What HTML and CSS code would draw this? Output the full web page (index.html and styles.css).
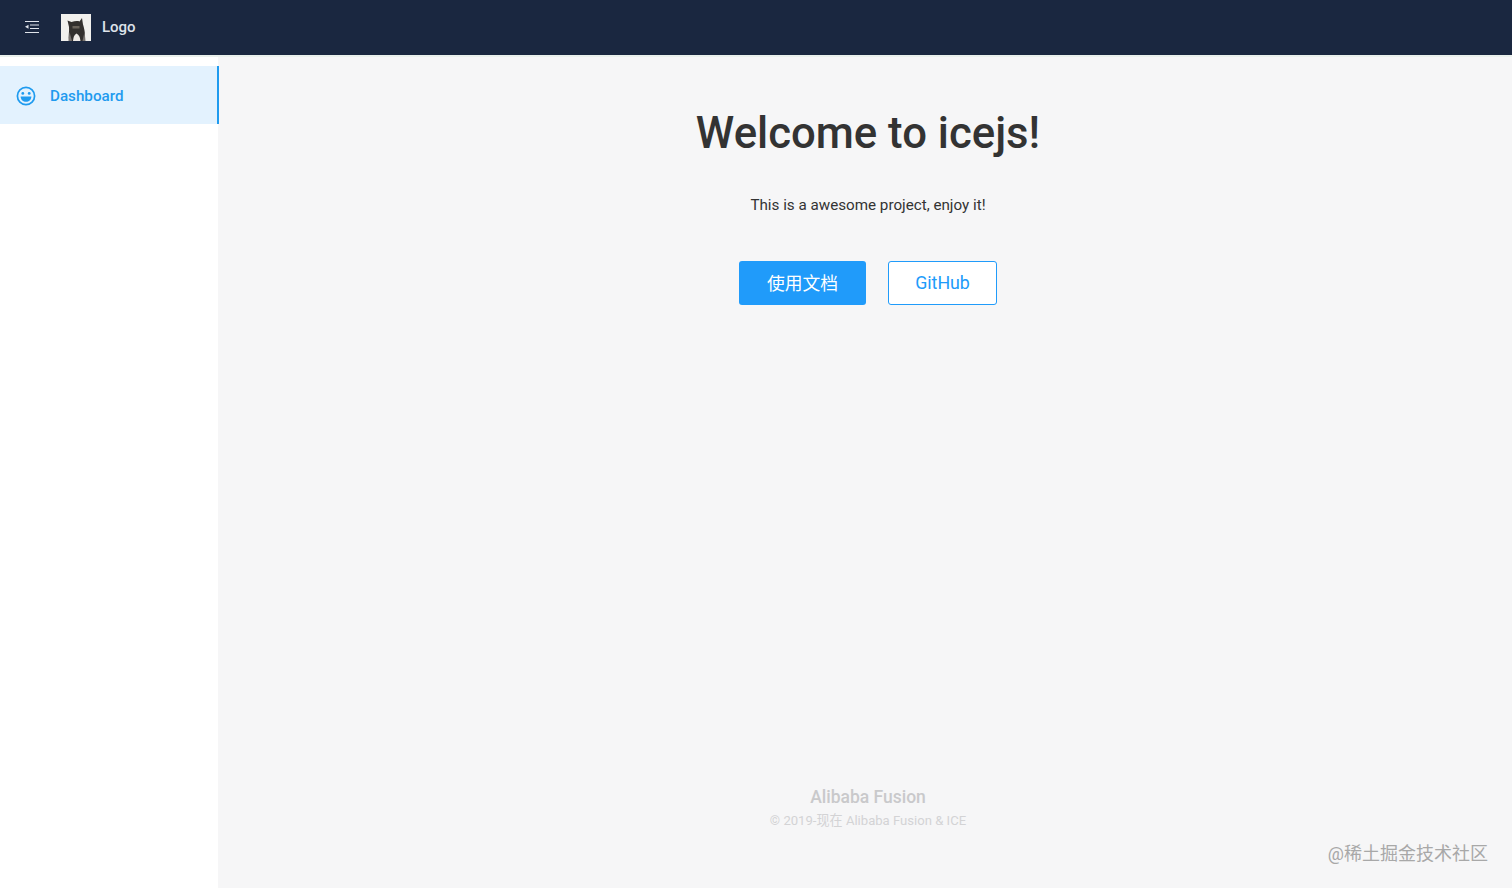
FILE: index.html
```html
<!DOCTYPE html>
<html lang="zh">
<head>
<meta charset="utf-8">
<title>icejs</title>
<link rel="stylesheet" href="styles.css">
</head>
<body>
<header class="topbar">
  <svg class="trigger" width="16" height="14" viewBox="0 0 16 14" aria-hidden="true">
    <path d="M1 1.500H15M6 5H15M6 8.500H15M1 12.500H15" stroke="#dfe3ea" stroke-width="1" fill="none"/>
    <path d="M1 6.800 L4.500 4.800 V8.800 Z" fill="#dfe3ea"/>
  </svg>
  <svg class="logo" width="30" height="27" viewBox="0 0 30 27" aria-hidden="true">
    <rect width="30" height="27" fill="#f1f0ed"/>
    <path d="M8 27 C7 22 8.500 18 8 13 L6.500 6.500 L10.500 8 C14 6.800 17 6.800 18.500 7.500 L21 4 L22 10.500 C23 14 24.500 18 24 27 Z" fill="#33302e"/>
    <path d="M12 27 C12.500 23 13 21 15.500 19.500 C18 21 19 23 19.500 27 Z" fill="#eeeae6"/>
    <path d="M11.500 12 H18.500 V14.500 H11.500 Z" fill="#6b645c"/>
    <path d="M8.500 18 L11 27 H7.500 Z M23.500 18 L21.500 27 H24.500 Z" fill="#77726f"/>
  </svg>
  <span class="brand">Logo</span>
</header>
<div class="layout">
  <aside class="sidebar">
    <nav class="menu">
      <a class="menu-item" href="#">
        <svg class="smile" width="20" height="20" viewBox="0 0 20 20" aria-hidden="true">
          <circle cx="10" cy="10" r="8.600" fill="none" stroke="#1f9bef" stroke-width="1.700"/>
          <circle cx="6.800" cy="7.400" r="1.400" fill="#1f9bef"/>
          <circle cx="13.200" cy="7.400" r="1.400" fill="#1f9bef"/>
          <path d="M4.600 10.400 H15.400 C15.200 13.800 12.900 15.800 10 15.800 C7.100 15.800 4.800 13.800 4.600 10.400 Z" fill="#1f9bef"/>
        </svg>
        <span class="menu-label">Dashboard</span>
      </a>
    </nav>
  </aside>
  <main class="content">
    <section class="hero">
      <h1 class="title">Welcome to icejs!</h1>
      <p class="lead">This is a awesome project, enjoy it!</p>
      <div class="actions">
        <a class="btn btn-primary" href="#">使用文档</a>
        <a class="btn btn-outline" href="#">GitHub</a>
      </div>
    </section>
    <footer class="footer">
      <div class="footer-name">Alibaba Fusion</div>
      <div class="footer-copy">© 2019-现在 Alibaba Fusion &amp; ICE</div>
    </footer>
  </main>
</div>
<div class="watermark">@稀土掘金技术社区</div>
</body>
</html>
```
FILE: styles.css
```css
* { box-sizing: border-box; }
html, body { height: 100%; }
body {
  margin: 0;
  height: 888px;
  overflow: hidden;
  display: flex;
  flex-direction: column;
  background: #f6f6f7;
  font-family: Roboto, "Noto Sans CJK SC", sans-serif;
}
.topbar {
  height: 55px;
  flex: none;
  display: flex;
  align-items: center;
  padding-left: 24px;
  background: #1a2740;
}
.trigger { flex: none; margin-top: -2px; }
.logo { flex: none; margin-left: 21px; margin-top: -1px; }
.brand {
  margin-left: 11px;
  margin-top: -1px;
  color: #dfe3ea;
  font-size: 15px;
  font-weight: 500;
}
.layout {
  flex: 1;
  display: flex;
  min-height: 0;
  border-top: 2px solid #e9f0ec;
}
.sidebar {
  width: 218px;
  flex: none;
  background: #fff;
  padding-top: 9px;
}
.menu-item {
  height: 58px;
  margin-right: -1px;
  display: flex;
  align-items: center;
  gap: 14px;
  padding-left: 16px;
  background: #e3f2fe;
  border-right: 2px solid #1f9bef;
  color: #1f9bef;
  font-size: 15.200px;
  font-weight: 500;
  text-decoration: none;
}
.smile { margin-top: 2px; }
.menu-label { margin-top: 2px; }
.content {
  flex: 1;
  display: flex;
  flex-direction: column;
  align-items: center;
  padding-left: 6px;
}
.hero {
  display: flex;
  flex-direction: column;
  align-items: center;
  padding-top: 47px;
  flex: 1;
}
.title {
  margin: 0;
  color: #333;
  font-size: 43.700px;
  line-height: 58px;
  font-weight: 500;
}
.lead {
  margin: 31px 0 0;
  color: #333;
  font-size: 15.200px;
  line-height: 24px;
}
.actions {
  display: flex;
  gap: 22px;
  margin-top: 44px;
}
.btn {
  height: 44px;
  display: flex;
  align-items: center;
  justify-content: center;
  border-radius: 3px;
  padding-bottom: 2px;
  font-size: 17.800px;
  text-decoration: none;
}
.btn-primary {
  width: 127px;
  background: #209bfa;
  color: #fff;
}
.btn-outline {
  width: 109px;
  background: #fff;
  border: 1px solid #209bfa;
  color: #209bfa;
}
.footer {
  text-align: center;
  padding-bottom: 55px;
}
.footer-name {
  color: #c9c9cb;
  font-size: 17.500px;
  font-weight: 500;
  line-height: 24px;
}
.footer-copy {
  color: #d3d3d5;
  font-size: 13.100px;
  line-height: 24px;
}
.watermark {
  position: absolute;
  right: 24px;
  top: 842px;
  color: #a8a8a8;
  font-size: 18px;
  line-height: 24px;
}
```
